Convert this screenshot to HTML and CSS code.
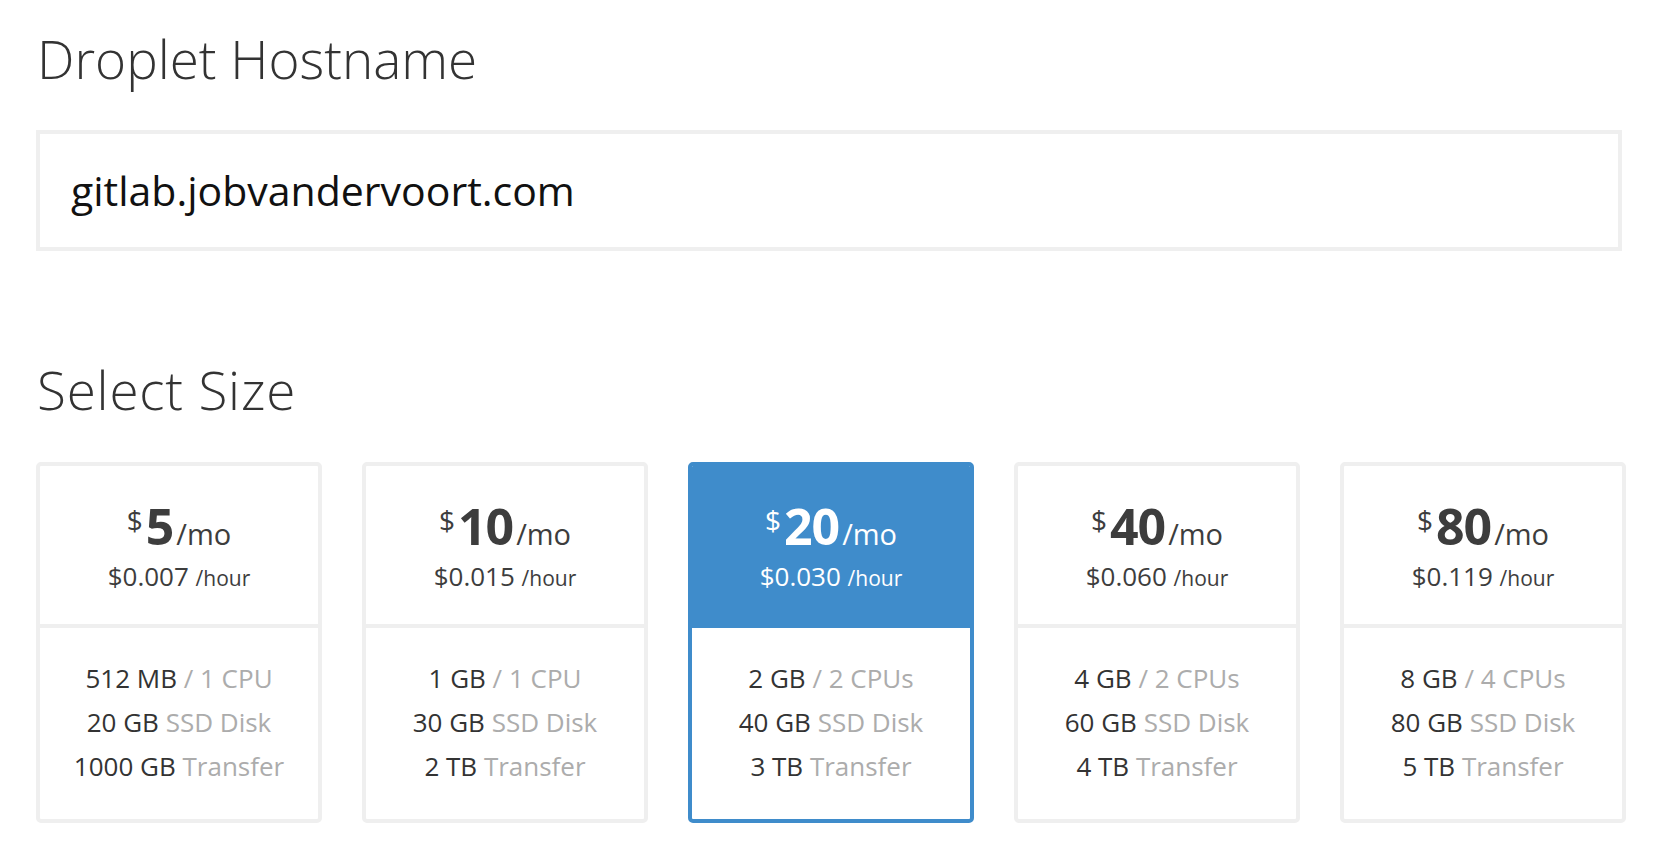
FILE: index.html
```html
<!DOCTYPE html>
<html lang="en">
<head>
<meta charset="utf-8">
<title>Create Droplet</title>
<link rel="stylesheet" href="styles.css">
</head>
<body>
<main class="page">
  <h2 class="section-title">Droplet Hostname</h2>
  <div class="hostname-field">gitlab.jobvandervoort.com</div>

  <h2 class="section-title size-title">Select Size</h2>
  <div class="size-grid">
    <div class="size-card">
      <div class="size-head">
        <div class="price"><span class="cur">$</span><span class="amount">5</span><span class="per">/mo</span></div>
        <div class="hourly">$0.007 <span class="per-hour">/hour</span></div>
      </div>
      <div class="size-specs">
        <div>512 MB <span class="muted">/ 1 CPU</span></div>
        <div>20 GB <span class="muted">SSD Disk</span></div>
        <div>1000 GB <span class="muted">Transfer</span></div>
      </div>
    </div>
    <div class="size-card">
      <div class="size-head">
        <div class="price"><span class="cur">$</span><span class="amount">10</span><span class="per">/mo</span></div>
        <div class="hourly">$0.015 <span class="per-hour">/hour</span></div>
      </div>
      <div class="size-specs">
        <div>1 GB <span class="muted">/ 1 CPU</span></div>
        <div>30 GB <span class="muted">SSD Disk</span></div>
        <div>2 TB <span class="muted">Transfer</span></div>
      </div>
    </div>
    <div class="size-card selected">
      <div class="size-head">
        <div class="price"><span class="cur">$</span><span class="amount">20</span><span class="per">/mo</span></div>
        <div class="hourly">$0.030 <span class="per-hour">/hour</span></div>
      </div>
      <div class="size-specs">
        <div>2 GB <span class="muted">/ 2 CPUs</span></div>
        <div>40 GB <span class="muted">SSD Disk</span></div>
        <div>3 TB <span class="muted">Transfer</span></div>
      </div>
    </div>
    <div class="size-card">
      <div class="size-head">
        <div class="price"><span class="cur">$</span><span class="amount">40</span><span class="per">/mo</span></div>
        <div class="hourly">$0.060 <span class="per-hour">/hour</span></div>
      </div>
      <div class="size-specs">
        <div>4 GB <span class="muted">/ 2 CPUs</span></div>
        <div>60 GB <span class="muted">SSD Disk</span></div>
        <div>4 TB <span class="muted">Transfer</span></div>
      </div>
    </div>
    <div class="size-card">
      <div class="size-head">
        <div class="price"><span class="cur">$</span><span class="amount">80</span><span class="per">/mo</span></div>
        <div class="hourly">$0.119 <span class="per-hour">/hour</span></div>
      </div>
      <div class="size-specs">
        <div>8 GB <span class="muted">/ 4 CPUs</span></div>
        <div>80 GB <span class="muted">SSD Disk</span></div>
        <div>5 TB <span class="muted">Transfer</span></div>
      </div>
    </div>
  </div>
</main>
</body>
</html>
```
FILE: styles.css
```css
* { box-sizing: border-box; }

html, body {
  margin: 0;
  padding: 0;
  background: #ffffff;
}

body {
  font-family: "Open Sans", "Liberation Sans", sans-serif;
  color: #3d3d3d;
}

.page {
  width: 1590px;
  margin-left: 36px;
  padding-top: 27px;
}

.section-title {
  margin: 0;
  font-size: 53px;
  font-weight: 300;
  line-height: 64px;
  color: #333333;
  padding-left: 1px;
}

.size-title {
  margin-top: 107px;
  letter-spacing: 0.8px;
}

.hostname-field {
  margin-top: 39px;
  margin-right: 4px;
  height: 121px;
  border: 4px solid #efefef;
  padding-left: 31px;
  font-size: 41px;
  line-height: 113px;
  color: #111111;
}

.size-grid {
  margin-top: 40px;
  display: grid;
  grid-template-columns: repeat(5, 286px);
  column-gap: 40px;
}

.size-card {
  border: 4px solid #efefef;
  border-radius: 5px;
  text-align: center;
  overflow: hidden;
}

.size-head {
  height: 162px;
  padding-top: 30px;
  border-bottom: 4px solid #efefef;
}

.price {
  font-size: 50px;
  line-height: 60px;
  white-space: nowrap;
}

.cur {
  font-size: 28px;
  line-height: 1;
  vertical-align: 14px;
  margin-right: 3px;
}

.amount {
  font-weight: 700;
  letter-spacing: -1px;
}

.per {
  font-size: 29px;
  line-height: 1;
  margin-left: 3px;
}

.hourly {
  margin-top: 3px;
  font-size: 26px;
  line-height: 34px;
}

.per-hour {
  font-size: 21px;
}

.size-specs {
  padding: 28px 0 31px;
  font-size: 26px;
  line-height: 44px;
  color: #333333;
}

.muted {
  color: #acacac;
}

.size-card.selected {
  border-color: #3f8ccb;
}

.size-card.selected .size-head {
  background: #3f8ccb;
  border-bottom-color: #3f8ccb;
  color: #ffffff;
}
```
